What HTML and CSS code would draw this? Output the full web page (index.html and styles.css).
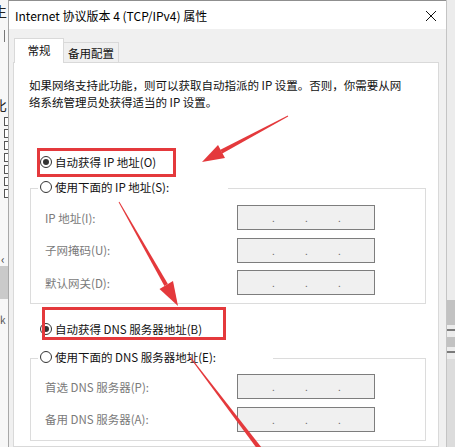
FILE: index.html
```html
<!DOCTYPE html>
<html lang="zh-CN">
<head>
    <meta charset="UTF-8">
    <title>Internet 协议版本 4 (TCP/IPv4) 属性</title>
    <link rel="stylesheet" href="styles.css">
</head>
<body>
    <div class="backdrop-left">
        <span class="bg-char">生</span>
        <span class="bg-bar"></span>
        <span class="bg-char bg-char-low">比</span>
        <span class="bg-check"></span>
        <span class="bg-check"></span>
        <span class="bg-check"></span>
        <span class="bg-check"></span>
        <span class="bg-check"></span>
        <span class="bg-check"></span>
        <span class="bg-check"></span>
        <span class="bg-caret">‹</span>
        <span class="bg-band"></span>
        <span class="bg-char bg-char-small">k</span>
    </div>

    <div class="dialog">
        <div class="titlebar">
            <span class="title">Internet 协议版本 4 (TCP/IPv4) 属性</span>
            <svg class="close" width="12" height="12" viewBox="0 0 12 12">
                <path d="M1 1 L11 11 M11 1 L1 11" stroke="#111" stroke-width="1" fill="none"/>
            </svg>
        </div>

        <div class="dialog-body">
            <div class="tabs">
                <div class="tab active">常规</div>
                <div class="tab">备用配置</div>
            </div>

            <div class="panel">
                <p class="intro">如果网络支持此功能，则可以获取自动指派的 IP 设置。否则，你需要从网<br>络系统管理员处获得适当的 IP 设置。</p>

                <div class="radio-row first">
                    <span class="radio checked"></span>
                    <span>自动获得 IP 地址(O)</span>
                </div>

                <div class="group">
                    <div class="radio-row legend legend-ip">
                        <span class="radio"></span>
                        <span>使用下面的 IP 地址(S):</span>
                    </div>
                    <div class="fields">
                        <span class="field-label">IP 地址(I):</span>
                        <div class="ip-box"><span>.</span><span>.</span><span>.</span></div>
                        <span class="field-label">子网掩码(U):</span>
                        <div class="ip-box"><span>.</span><span>.</span><span>.</span></div>
                        <span class="field-label">默认网关(D):</span>
                        <div class="ip-box"><span>.</span><span>.</span><span>.</span></div>
                    </div>
                </div>

                <div class="radio-row dns-auto">
                    <span class="radio checked"></span>
                    <span>自动获得 DNS 服务器地址(B)</span>
                </div>

                <div class="group group-dns">
                    <div class="radio-row legend legend-dns">
                        <span class="radio"></span>
                        <span>使用下面的 DNS 服务器地址(E):</span>
                    </div>
                    <div class="fields">
                        <span class="field-label">首选 DNS 服务器(P):</span>
                        <div class="ip-box"><span>.</span><span>.</span><span>.</span></div>
                        <span class="field-label">备用 DNS 服务器(A):</span>
                        <div class="ip-box"><span>.</span><span>.</span><span>.</span></div>
                    </div>
                </div>
            </div>
        </div>
    </div>

    <div class="backdrop-right">
        <span class="rs-plain"></span>
        <span class="rs-band"></span>
        <span class="rs-line"></span>
        <span class="rs-band rs-band-thin"></span>
        <span class="rs-line"></span>
        <span class="rs-rest"></span>
    </div>

    <!-- 红色标注 -->
    <svg class="marks" width="455" height="447" viewBox="0 0 455 447">
        <rect x="38.5" y="149.5" width="136" height="26" fill="none" stroke="#e4393c" stroke-width="3"/>
        <rect x="43.5" y="308.5" width="181" height="30" fill="none" stroke="#e4393c" stroke-width="3"/>
        <!-- 箭头 1 -->
        <polygon points="288.2,116.4 287.8,115.6 220.4,149.8 222.3,153.4" fill="#e4393c"/>
        <polygon points="202,162 218,145 225,158" fill="#e4393c"/>
        <!-- 箭头 2 -->
        <polygon points="118.6,202.3 119.4,201.7 167.9,284.1 164.4,286.1" fill="#e4393c"/>
        <polygon points="178,306 159.5,289 173,281" fill="#e4393c"/>
        <!-- 箭头 3 -->
        <polygon points="189.6,357.3 190.4,356.7 263.5,450 259.5,452" fill="#e4393c"/>
    </svg>
</body>
</html>
```

FILE: styles.css
```css
body {
    margin: 0;
    width: 455px;
    height: 447px;
    overflow: hidden;
    display: flex;
    position: relative;
    font-family: "Noto Sans CJK SC", "Noto Sans", sans-serif;
    font-size: 11.5px;
    color: #111111;
    background-color: #e9e9e9;
}

/* 左边后面的窗口 */
.backdrop-left {
    width: 8px;
    flex-shrink: 0;
    background-color: #f7f7f7;
    display: flex;
    flex-direction: column;
    overflow: hidden;
}

.bg-char {
    margin-left: -7px;
    font-size: 14px;
    line-height: 18px;
    margin-top: 2px;
    color: #222;
}

.bg-bar {
    margin-top: 10px;
    margin-left: 4px;
    width: 1px;
    height: 12px;
    background-color: #777;
}

.bg-char-low {
    margin-top: 54px;
}

.bg-check {
    margin-top: 3px;
    margin-left: 4px;
    width: 9px;
    height: 9px;
    border: 1px solid #555;
    box-sizing: border-box;
    background-color: #fff;
}

.bg-caret {
    margin-top: 54px;
    margin-left: 1px;
    font-size: 12px;
    line-height: 14px;
    color: #444;
}

.bg-band {
    height: 33px;
    background-color: #cacaca;
}

.bg-char-small {
    margin-left: 0;
    margin-top: 12px;
    font-size: 10px;
    color: #555;
}

/* 右边 */
.backdrop-right {
    width: 8px;
    flex-shrink: 0;
    display: flex;
    flex-direction: column;
    background-color: #ececec;
    border-left: 1px solid #c4c4c4;
}

.rs-plain {
    height: 300px;
}

.rs-band {
    height: 25px;
    background-color: #c2c2c2;
}

.rs-band-thin {
    height: 10px;
}

.rs-line {
    height: 2px;
    margin-top: 4px;
    background-color: #7a7a7a;
    margin-bottom: 6px;
}

.rs-rest {
    flex: 1;
    background-color: #dcdcdc;
}

/* 对话框 */
.dialog {
    flex: 1;
    display: flex;
    flex-direction: column;
    border-left: 1px solid #a8a8a8;
    border-top: 1px solid #8f8f8f;
    background-color: #f0f0f0;
}

.titlebar {
    height: 28px;
    background-color: #ffffff;
    display: flex;
    align-items: center;
    justify-content: space-between;
    padding: 0 9px 0 6px;
}

.title {
    font-size: 12px;
    color: #000;
}

.close {
    margin-top: 1px;
}

.dialog-body {
    flex: 1;
    display: flex;
    flex-direction: column;
    padding: 9px 7px 0 4px;
}

.tabs {
    display: flex;
    align-items: flex-end;
    margin-left: 1px;
}

.tab {
    height: 20px;
    line-height: 20px;
    padding: 0 4px;
    width: 46px;
    box-sizing: content-box;
    border: 1px solid #d9d9d9;
    border-bottom: none;
    border-left: none;
    background-color: #f0f0f0;
    text-align: center;
}

.tab.active {
    position: relative;
    z-index: 1;
    height: 24px;
    line-height: 23px;
    width: 40px;
    border-left: 1px solid #d9d9d9;
    background-color: #ffffff;
}

.panel {
    flex: 1;
    margin-top: -1px;
    background-color: #ffffff;
    border: 1px solid #d9d9d9;
    padding: 14px 0 0 15px;
}

.intro {
    margin: 0;
    line-height: 17px;
}

.radio-row {
    display: flex;
    align-items: center;
    gap: 3px;
    height: 20px;
    margin-left: 11px;
}

.radio-row.first {
    margin-top: 41px;
}

.radio {
    width: 12px;
    height: 12px;
    box-sizing: border-box;
    border: 1px solid #333;
    border-radius: 50%;
    background-color: #fff;
    display: flex;
    align-items: center;
    justify-content: center;
}

.radio.checked::after {
    content: "";
    width: 6px;
    height: 6px;
    border-radius: 50%;
    background-color: #333;
}

.group {
    margin-top: 16px;
    margin-left: 1px;
    width: 396px;
    box-sizing: border-box;
    border: 1px solid #dcdcdc;
    padding-bottom: 8px;
}

.radio-row.legend {
    margin-top: -12px;
    margin-left: 7px;
    padding-left: 2px;
    background-color: #ffffff;
}

.legend-ip {
    width: 188px;
}

.legend-dns {
    width: 233px;
}

.fields {
    display: grid;
    grid-template-columns: 192px 138px;
    grid-auto-rows: 25px;
    row-gap: 7.5px;
    align-items: center;
    margin-top: 8px;
    padding-left: 14px;
}

.field-label {
    color: #7a7a7a;
}

.ip-box {
    height: 25px;
    box-sizing: border-box;
    border: 1px solid #7d7d7d;
    background-color: #f0f0f0;
    display: grid;
    grid-template-columns: repeat(3, 33px);
    padding-left: 19px;
    align-items: center;
    color: #6a6a6a;
    font-size: 10px;
    text-align: center;
}

.dns-auto {
    margin-top: 15px;
}

.group-dns {
    margin-top: 19px;
}

.group-dns .fields {
    margin-top: 7px;
}

/* 标注层 */
.marks {
    position: absolute;
    top: 0;
    left: 0;
    pointer-events: none;
}
```
